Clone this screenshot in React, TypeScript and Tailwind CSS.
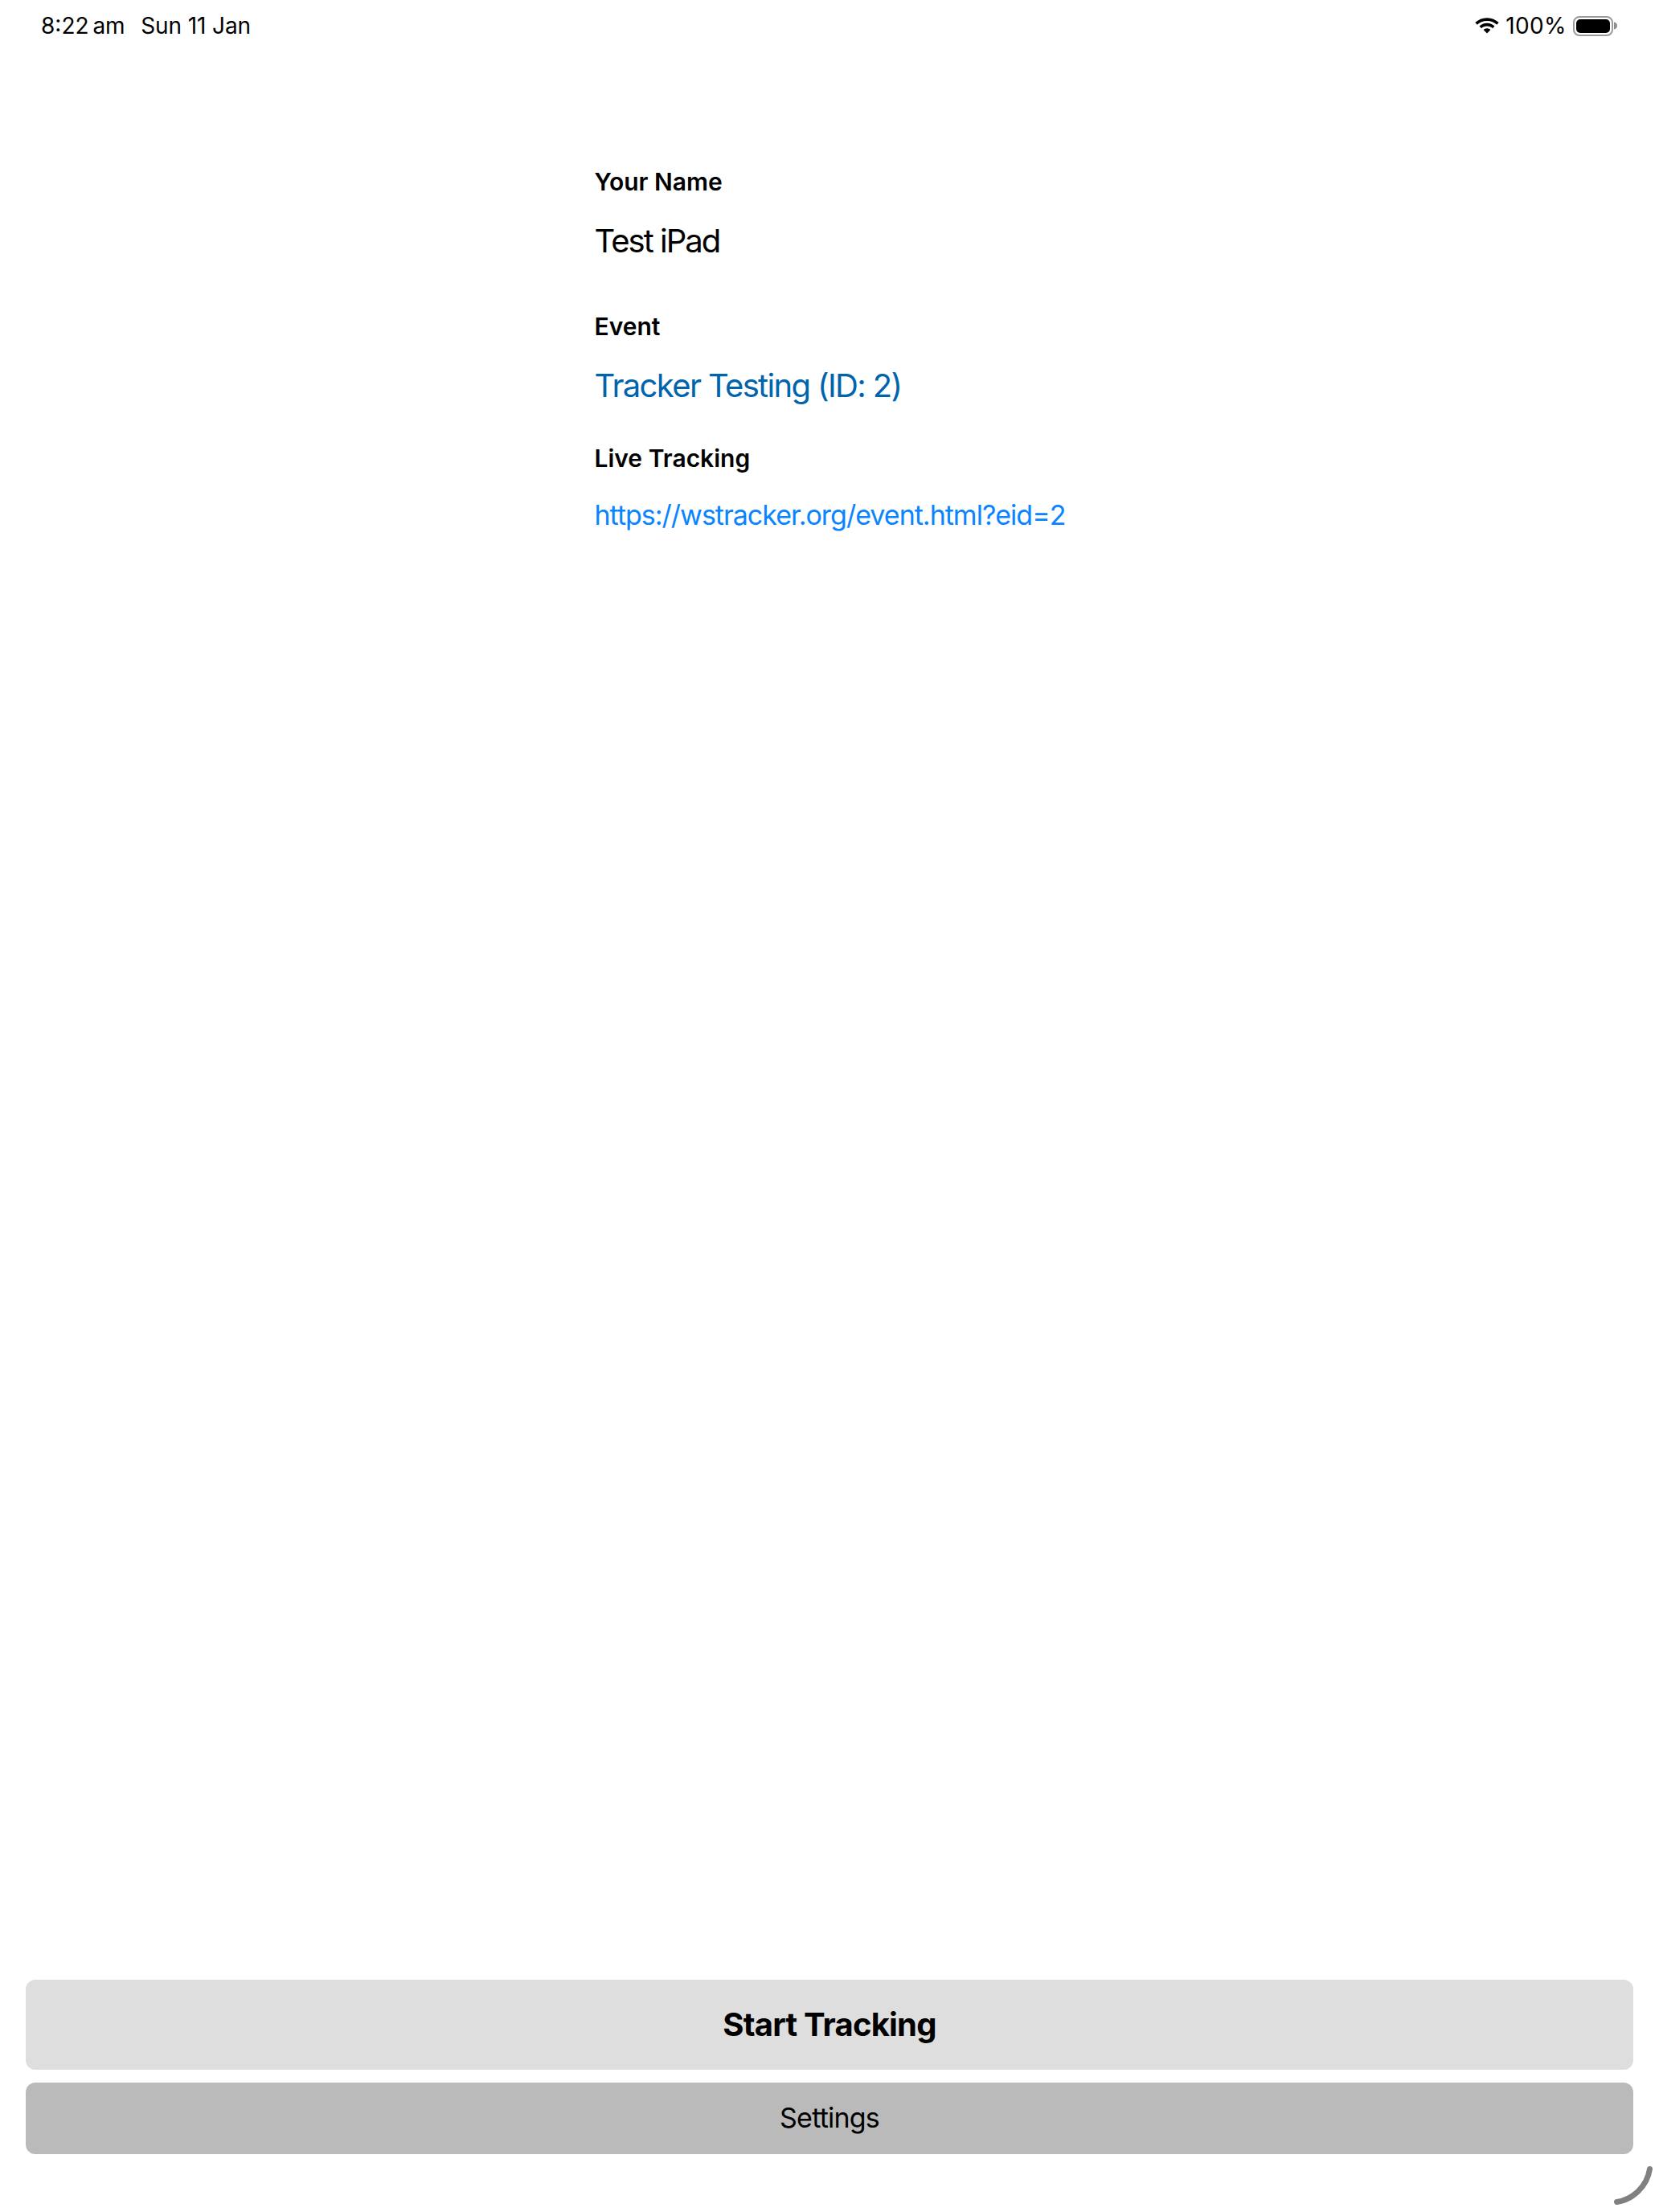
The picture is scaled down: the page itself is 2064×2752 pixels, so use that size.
import React from "react";

function Wifi() {
  return (
    <svg width="30" height="20" viewBox="0 0 30 20" className="block">
      <path d="M15 0.2C9.3 0.2 4.2 2.4 0.3 6.1L2.8 8.8C6 5.8 10.3 3.9 15 3.9C19.7 3.9 24 5.8 27.2 8.8L29.7 6.1C25.8 2.4 20.7 0.2 15 0.2Z" fill="#000" />
      <path d="M15 6.8C11.3 6.8 8 8.2 5.5 10.6L8 13.2C9.8 11.5 12.3 10.5 15 10.5C17.7 10.5 20.2 11.5 22 13.2L24.5 10.6C22 8.2 18.7 6.8 15 6.8Z" fill="#000" />
      <path d="M15 13.3C13.3 13.3 11.8 14 10.6 15L15 19.6L19.4 15C18.2 14 16.7 13.3 15 13.3Z" fill="#000" />
    </svg>
  );
}

function Battery() {
  return (
    <div className="flex items-center">
      <div className="w-[50px] h-[25px] rounded-[8px] border-[2px] border-[#9b9b9b] p-[2px]">
        <div className="w-full h-full rounded-[5px] bg-black" />
      </div>
      <svg width="5" height="10" viewBox="0 0 5 10" className="block ml-[1px]">
        <path d="M0 0.5C2.6 1 4 2.8 4 5C4 7.2 2.6 9 0 9.5Z" fill="#8e8e8e" />
      </svg>
    </div>
  );
}

export default function App() {
  return (
    <div className="relative w-[2064px] h-[2752px] bg-white overflow-hidden flex flex-col font-['Inter','Liberation_Sans',sans-serif] text-black">
      <div className="flex items-center justify-between h-[64px] pl-[51px] pr-[51px] text-[28px] leading-[34px]">
        <div className="flex">
          <span>8:22</span>
          <span className="ml-[5px] tracking-[-0.3px]">am</span>
          <span className="ml-[20px] tracking-[-0.1px]">Sun 11 Jan</span>
        </div>
        <div className="flex items-center">
          <Wifi />
          <span className="ml-[8px] tracking-[0.4px]">100%</span>
          <span className="ml-[8px]"><Battery /></span>
        </div>
      </div>

      <div className="w-[585px] mx-auto flex flex-col flex-1">
        <div className="mt-[144px] text-[30px] leading-[36px] font-semibold">Your Name</div>
        <div className="mt-[32px] text-[40px] leading-[48px] tracking-[-2px]">Test iPad</div>
        <div className="mt-[64px] text-[30px] leading-[36px] font-semibold">Event</div>
        <div className="mt-[32px] text-[40px] leading-[48px] tracking-[-1.65px] text-[#0064ad] whitespace-nowrap">Tracker Testing (ID: 2)</div>
        <div className="mt-[48px] text-[30px] leading-[36px] font-semibold">Live Tracking</div>
        <div className="mt-[33px] text-[34px] leading-[40px] tracking-[-1px] text-[#0a84ff] whitespace-nowrap">https://wstracker.org/event.html?eid=2</div>
      </div>

      <div className="flex flex-col gap-[16px] px-[32px] pb-[72px]">
        <button className="h-[112px] rounded-[12px] bg-[#dedede] text-[40px] font-bold tracking-[-0.8px]">Start Tracking</button>
        <button className="h-[89px] pb-[2px] rounded-[12px] bg-[#bababa] text-[34px] tracking-[-0.8px]">Settings</button>
      </div>

      <svg className="absolute right-[8px] bottom-[9px]" width="48" height="48" viewBox="0 0 48 48">
        <path d="M3.5 44.5C23 41.5 41 26 44.5 3.5" fill="none" stroke="#808080" strokeWidth="7" strokeLinecap="round" />
      </svg>
    </div>
  );
}
